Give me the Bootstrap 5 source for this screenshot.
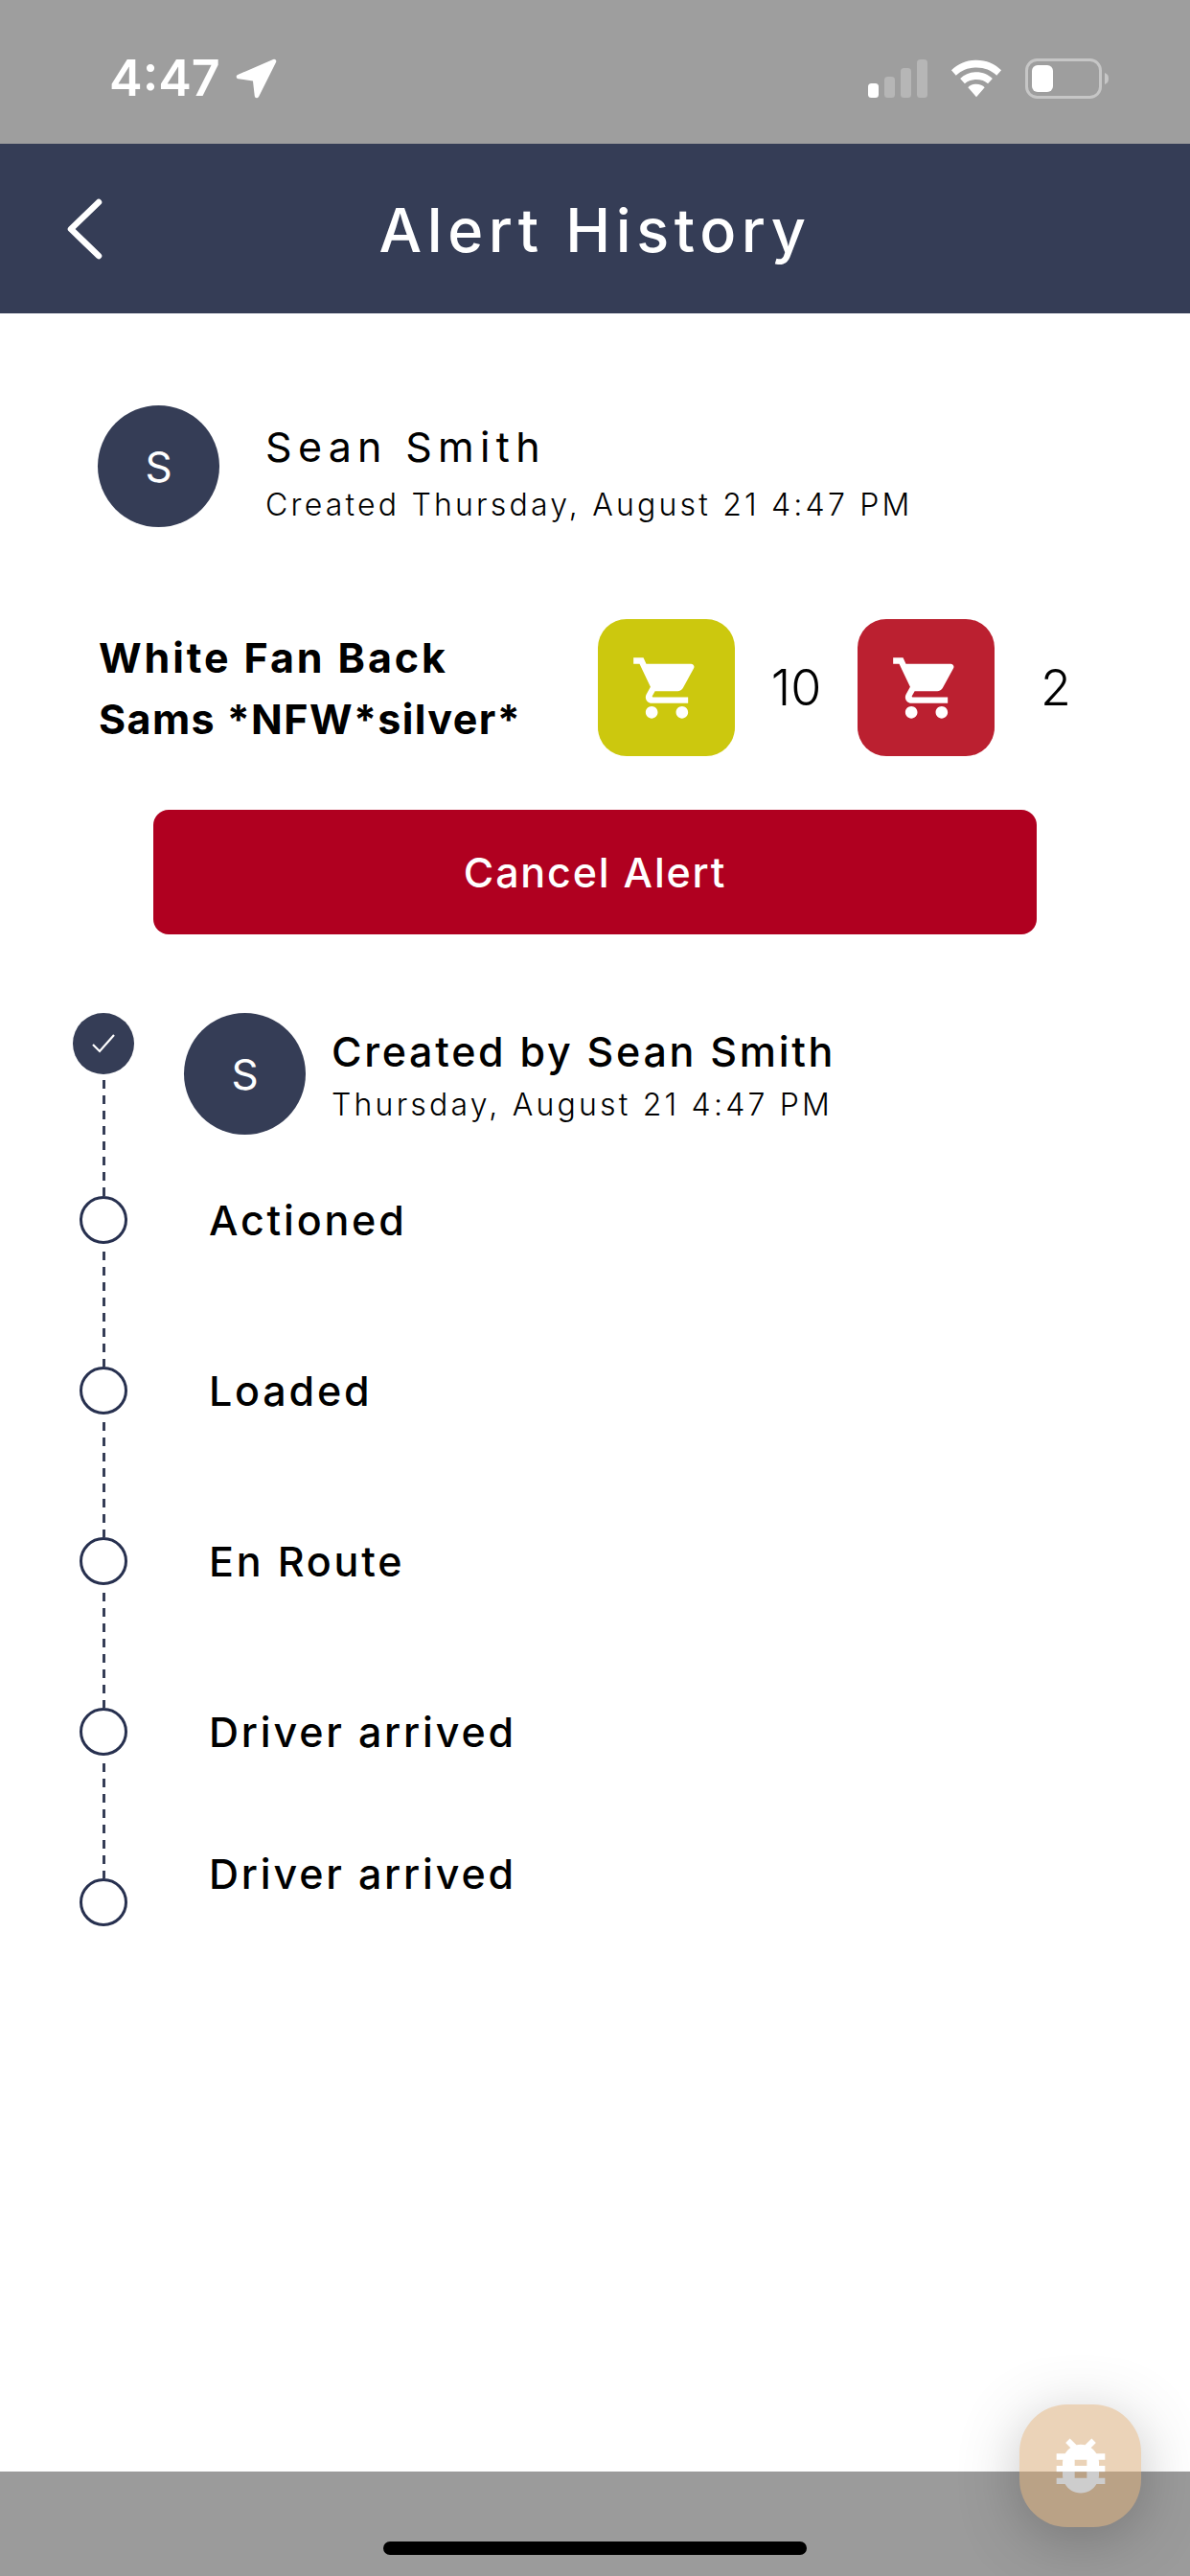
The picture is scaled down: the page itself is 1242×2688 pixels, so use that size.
<!DOCTYPE html>
<html lang="en"><head><meta charset="utf-8"><title>Alert History</title>
<link href="https://cdn.jsdelivr.net/npm/bootstrap@5.3.0/dist/css/bootstrap.min.css" rel="stylesheet">
<style>
html,body{height:100%}
body{font-family:Inter,"Liberation Sans",sans-serif;color:#000;background:#fff;width:1242px;height:2688px;overflow:hidden}
.stat-bar{height:150px;background:#9e9e9e;padding:14px 84px 0 114px}
.stat-time{font:600 52px/1 Inter,sans-serif;color:#fff;letter-spacing:0}
.stat-left{gap:16px}
.stat-right{gap:24px}
.hdr{height:177px;background:#353d56;padding:0}
.hdr-side{width:200px;padding-left:68px}
.hdr-title{font-size:63px;font-weight:500;letter-spacing:5.600px;color:#fff;line-height:1;margin:0;padding-top:4px}
.user-row{padding:96px 0 0 102px;gap:48px}
.avatar{width:127px;height:127px;background:#353d56;color:#fff;font-size:44px;flex:none}
.user-text{padding-top:14px}
.user-name{font-size:43px;letter-spacing:6.300px;line-height:58px}
.user-sub{font-size:32px;font-weight:300;letter-spacing:3.200px;line-height:44px;margin-top:10px}
.prod-row{margin-top:96px;padding-left:103px}
.prod-name{width:521px;font-size:43px;font-weight:700;line-height:64px;letter-spacing:1.400px}
.prod-first{letter-spacing:2.900px}
.stock-box{width:143px;height:143px;border-radius:30px;flex:none}
.stock-y{background:#ccc80e}
.stock-r{background:#bb2030}
.stock-num{width:128px;text-align:center;font-size:52px;font-weight:300;line-height:1}
.cancel-btn{display:block;margin:56px 0 0 160px;width:922px;height:130px;background:#b00020;border:0;border-radius:16px;color:#fff;font-size:43px;font-weight:500;letter-spacing:1.800px;line-height:130px;padding:0}
.cancel-btn:hover{background:#b00020;color:#fff}
.tl{margin-top:82px;padding-left:76px}
.rail{width:64px;flex:none}
.rail-done{width:64px;height:64px;background:#353d56;flex:none}
.rail-dot{width:50px;height:50px;border:3px solid #27304f;background:#fff;flex:none}
.rail-line{width:3px;height:120px;margin-top:8px;flex:none;background:repeating-linear-gradient(to bottom,#353d56 0,#353d56 9px,transparent 9px,transparent 16px)}
.rail-line-first{height:121px;margin-top:6px}
.tl-labels{padding-left:52px}
.tl-first{gap:27px;height:127px}
.tl-head{padding-top:6px}
.tl-title{font-size:43px;font-weight:500;letter-spacing:2.700px;line-height:50px}
.tl-sub{font-size:32px;font-weight:300;letter-spacing:3.200px;line-height:44px;margin-top:9px}
.tl-label{height:50px;padding-left:26px;font-size:43px;font-weight:500;letter-spacing:2.800px;line-height:50px}
.tl-lbl-a{margin-top:64px}
.tl-lbl-b{margin-top:128px}
.tl-lbl-c{margin-top:98px}
.ftr{height:109px;background:#9b9b9b}
.home-bar{width:442px;height:14px;background:#000;border-radius:7px;margin-bottom:22px}
.page{height:2688px}
.bug-btn{position:absolute;left:1064px;top:2509px;width:127px;height:128px;border-radius:50px;background:#d9a973;opacity:.5;box-shadow:0 12px 60px rgba(0,0,0,.45)}
</style></head>
<body>
<div class="page d-flex flex-column position-relative">
  <div class="stat-bar d-flex align-items-center justify-content-between flex-none">
    <div class="stat-left d-flex align-items-center">
      <span class="stat-time">4:47</span>
      <svg width="44" height="42" viewBox="0 0 44 42"><path d="M40 3 3 19 20 21.500 22 39z" fill="#fff" stroke="#fff" stroke-width="4.500" stroke-linejoin="round"/></svg>
    </div>
    <div class="stat-right d-flex align-items-center">
      <svg width="62" height="40" viewBox="0 0 62 40"><rect x="0" y="25" width="11" height="15" rx="3.500" fill="#fff"/><rect x="17" y="18" width="11" height="22" rx="3.500" fill="#b6b6b6"/><rect x="34" y="9" width="11" height="31" rx="3.500" fill="#b6b6b6"/><rect x="51" y="0" width="11" height="40" rx="3.500" fill="#b6b6b6"/></svg>
      <svg width="54" height="40" viewBox="0 0 56 40"><path d="M28 0C17 0 8 4 1 11l5 5.500C12 11 19 8 28 8s16 3 22 8.500l5-5.500C48 4 39 0 28 0z" fill="#fff"/><path d="M28 13c-7 0-13 2.600-17.500 7l5 5.500C18.500 22.600 23 21 28 21s9.500 1.600 12.500 4.500l5-5.500C41 15.600 35 13 28 13z" fill="#fff"/><path d="M28 26c-3.800 0-7 1.300-9 3.500L28 40l9-10.500C35 27.300 31.800 26 28 26z" fill="#fff"/></svg>
      <svg width="88" height="42" viewBox="0 0 88 42"><rect x="1.500" y="1.500" width="77" height="39" rx="11" fill="none" stroke="#c6c6c6" stroke-width="3"/><rect x="7" y="7" width="22" height="28" rx="6" fill="#fff"/><path d="M83 15c3 1 4 3 4 6s-1 5-4 6z" fill="#c6c6c6"/></svg>
    </div>
  </div>
  <nav class="hdr navbar d-flex flex-nowrap align-items-center">
    <div class="hdr-side"><svg width="42" height="64" viewBox="0 0 42 64"><path d="M35 4 6 32l29 28" fill="none" stroke="#fff" stroke-width="6.500" stroke-linecap="round" stroke-linejoin="round"/></svg></div>
    <h1 class="hdr-title">Alert History</h1>
    <div class="hdr-side"></div>
  </nav>
  <main class="flex-grow-1">
    <div class="user-row d-flex align-items-start">
      <div class="avatar rounded-circle d-flex align-items-center justify-content-center">S</div>
      <div class="user-text">
        <div class="user-name">Sean Smith</div>
        <div class="user-sub">Created Thursday, August 21 4:47 PM</div>
      </div>
    </div>
    <div class="prod-row d-flex align-items-center">
      <div class="prod-name"><span class="prod-first">White Fan Back</span><br>Sams *NFW*silver*</div>
      <div class="stock-box stock-y d-flex align-items-center justify-content-center">
        <svg width="76" height="76" viewBox="0 0 24 24"><path fill="#fff" d="M7 18c-1.100 0-1.990.9-1.990 2S5.900 22 7 22s2-.9 2-2-.9-2-2-2zM1 2v2h2l3.600 7.590-1.350 2.450c-.16.28-.25.61-.25.96 0 1.100.9 2 2 2h12v-2H7.420c-.14 0-.25-.11-.25-.25l.03-.12.9-1.630h7.450c.75 0 1.410-.41 1.750-1.030l3.580-6.490c.08-.14.12-.31.12-.48 0-.55-.45-1-1-1H5.210l-.94-2H1zm16 16c-1.100 0-1.990.9-1.990 2s.89 2 1.990 2 2-.9 2-2-.9-2-2-2z"/></svg>
      </div>
      <div class="stock-num">10</div>
      <div class="stock-box stock-r d-flex align-items-center justify-content-center">
        <svg width="76" height="76" viewBox="0 0 24 24"><path fill="#fff" d="M7 18c-1.100 0-1.990.9-1.990 2S5.900 22 7 22s2-.9 2-2-.9-2-2-2zM1 2v2h2l3.600 7.590-1.350 2.450c-.16.28-.25.61-.25.96 0 1.100.9 2 2 2h12v-2H7.420c-.14 0-.25-.11-.25-.25l.03-.12.9-1.630h7.450c.75 0 1.410-.41 1.750-1.030l3.580-6.490c.08-.14.12-.31.12-.48 0-.55-.45-1-1-1H5.210l-.94-2H1zm16 16c-1.100 0-1.990.9-1.990 2s.89 2 1.990 2 2-.9 2-2-.9-2-2-2z"/></svg>
      </div>
      <div class="stock-num">2</div>
    </div>
    <button type="button" class="btn cancel-btn">Cancel Alert</button>
    <div class="tl d-flex">
      <div class="rail d-flex flex-column align-items-center">
        <div class="rail-done rounded-circle d-flex align-items-center justify-content-center">
          <svg width="26" height="22" viewBox="0 0 26 22"><path d="M2 12l7 7L24 2" fill="none" stroke="#fff" stroke-width="2.200"/></svg>
        </div>
        <div class="rail-line rail-line-first"></div>
        <div class="rail-dot rounded-circle"></div>
        <div class="rail-line"></div>
        <div class="rail-dot rounded-circle"></div>
        <div class="rail-line"></div>
        <div class="rail-dot rounded-circle"></div>
        <div class="rail-line"></div>
        <div class="rail-dot rounded-circle"></div>
        <div class="rail-line"></div>
        <div class="rail-dot rounded-circle"></div>
      </div>
      <div class="tl-labels flex-grow-1">
        <div class="tl-first d-flex align-items-center">
          <div class="avatar rounded-circle d-flex align-items-center justify-content-center">S</div>
          <div class="tl-head">
            <div class="tl-title">Created by Sean Smith</div>
            <div class="tl-sub">Thursday, August 21 4:47 PM</div>
          </div>
        </div>
        <div class="tl-label tl-lbl-a">Actioned</div>
        <div class="tl-label tl-lbl-b">Loaded</div>
        <div class="tl-label tl-lbl-b">En Route</div>
        <div class="tl-label tl-lbl-b">Driver arrived</div>
        <div class="tl-label tl-lbl-c">Driver arrived</div>
      </div>
    </div>
  </main>
  <div class="ftr d-flex align-items-end justify-content-center">
    <div class="home-bar"></div>
  </div>
  <div class="bug-btn d-flex align-items-center justify-content-center">
    <svg width="76" height="76" viewBox="0 0 24 24"><path fill="#fff" d="M20 8h-2.810c-.45-.78-1.070-1.450-1.820-1.960L17 4.410 15.590 3l-2.170 2.170C12.960 5.060 12.490 5 12 5c-.49 0-.96.06-1.410.17L8.410 3 7 4.410l1.620 1.630C7.880 6.550 7.260 7.220 6.810 8H4v2h2.090c-.05.33-.09.66-.09 1v1H4v2h2v1c0 .34.04.67.09 1H4v2h2.810c1.040 1.790 2.970 3 5.190 3s4.150-1.210 5.190-3H20v-2h-2.090c.05-.33.09-.66.09-1v-1h2v-2h-2v-1c0-.34-.04-.67-.09-1H20V8zm-6 8h-4v-2h4v2zm0-4h-4v-2h4v2z"/></svg>
  </div>
</div>
<script src="https://cdn.jsdelivr.net/npm/bootstrap@5.3.0/dist/js/bootstrap.bundle.min.js"></script>
</body></html>
